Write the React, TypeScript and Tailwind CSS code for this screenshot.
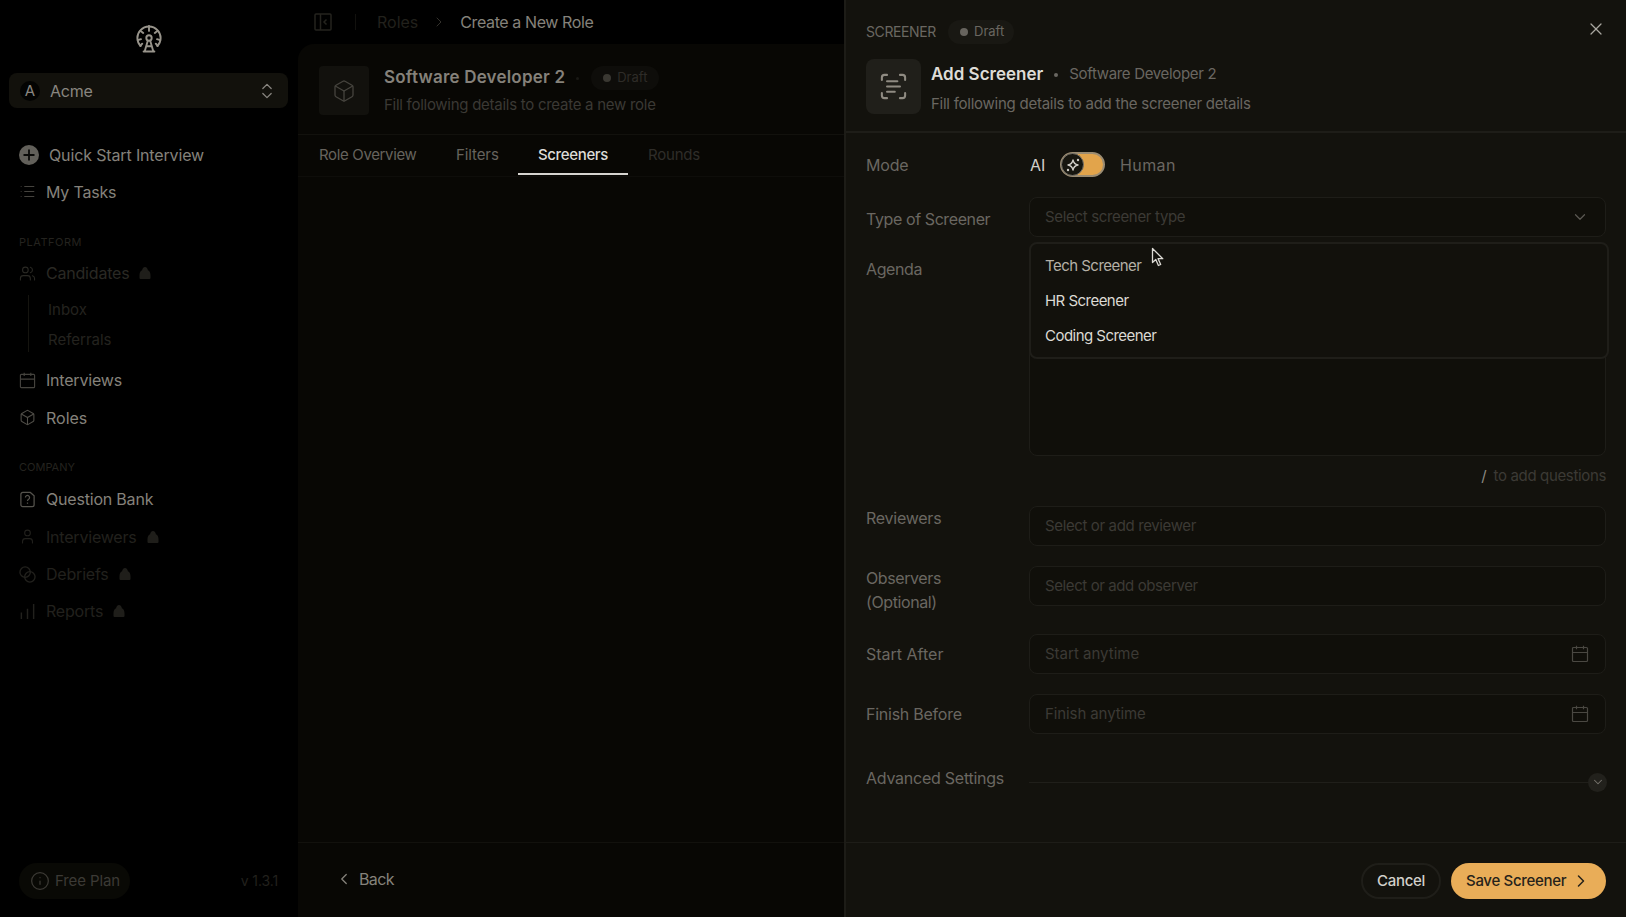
import React from 'react';
import {
  Box,
  ChevronDown,
  ChevronLeft,
  ChevronRight,
  ChevronsUpDown,
  Info,
  List,
  ScanText,
  User,
  Users,
  X,
} from 'lucide-react';

interface NavItemProps {
  icon: React.ReactNode;
  label: string;
  className?: string;
  locked?: boolean;
}

const CalendarIcon = ({ className }: { className?: string }) => (
  <svg viewBox="0 0 18 18" fill="none" stroke="currentColor" strokeWidth="1.2" className={className}>
    <rect x="1.5" y="2.5" width="15" height="14" rx="1" />
    <path d="M1.5 7.5h15M5.500 .8v3.400M12.500 .8v3.400" />
  </svg>
);

const Logo = () => (
  <svg viewBox="0 0 26 28" className="h-7 w-[26px] text-[#98948b]" fill="none" stroke="currentColor" strokeWidth="1.9" strokeLinecap="round">
    <path d="M4.600 21A11.300 11.300 0 0 1 4.600 5.200M4.600 5.200A11.300 11.300 0 0 1 21.400 5.200M21.400 5.200A11.300 11.300 0 0 1 21.400 21" />
    <path d="M13 .9v5M4.400 5.800l2.800 2.200M21.600 5.800l-2.800 2.200M1.800 15.200l3.200-1M24.200 15.200l-3.200-1M4.400 21l1.800-2.300M21.600 21l-1.800-2.300" />
    <circle cx="13" cy="13" r="2.700" />
    <path d="M11.800 15.800L8.800 26M14.200 15.800l3 10.200M7.600 26.500h10.800M11 21.200h4" />
  </svg>
);

const PanelIcon = () => (
  <svg viewBox="0 0 18 18" className="h-[18px] w-[18px] text-[#24231e]" fill="none" stroke="currentColor" strokeWidth="1.500">
    <rect x="1" y="1" width="16" height="16" rx="1" />
    <path d="M6.500 1v16M12.500 6.500L10 9l2.500 2.500" />
  </svg>
);

const SparkleIcon = () => (
  <svg viewBox="0 0 16 16" className="h-4 w-4 text-[#cfccc5]" fill="none" stroke="currentColor" strokeWidth="1.400" strokeLinejoin="round">
    <path d="M8 3c.6 3 2 4.400 5 5-3 .6-4.400 2-5 5-.6-3-2-4.400-5-5 3-.6 4.400-2 5-5Z" />
    <circle cx="13" cy="3" r="1.200" fill="currentColor" stroke="none" />
    <circle cx="3" cy="13" r="1.200" fill="currentColor" stroke="none" />
  </svg>
);

const LockBadge = () => (
  <svg viewBox="0 0 12 12" className="h-3 w-3 text-[#1f1e1a]" fill="currentColor">
    <path d="M6 0C7.6 0 8.6 1.4 8.9 3.2 10.800 4 11.500 6 11.500 8.600V11q0 1-1 1H1.500q-1 0-1-1V8.600C.5 6 1.200 4 3.100 3.200 3.400 1.400 4.400 0 6 0Z" />
  </svg>
);

const NavItem = ({ icon, label, className = 'text-[#85827b]', locked }: NavItemProps) => (
  <div className={`flex h-[37.4px] items-center pl-[19px] text-base tracking-[-0.2px] ${className}`}>
    <span className="flex w-[27px] shrink-0 items-center">{icon}</span>
    <span>{label}</span>
    {locked && <span className="ml-[10px]"><LockBadge /></span>}
  </div>
);

const Sidebar = () => (
  <aside className="flex w-[298px] shrink-0 flex-col bg-black">
    <div className="flex h-[73px] w-[297px] justify-center pt-[25px]">
      <Logo />
    </div>
    <div className="ml-[9px] flex h-[35px] w-[279px] items-center rounded-lg bg-[#12110c] pr-[11px] pl-[11px] text-[#898680]">
      <span className="flex h-5 w-5 items-center justify-center rounded-full bg-[#030302] pt-px text-[15px]">A</span>
      <span className="ml-[10px] text-base tracking-[-0.2px]">Acme</span>
      <ChevronsUpDown className="ml-auto h-5 w-5" strokeWidth={1.5} />
    </div>

    <div className="mt-[29px] flex h-[36px] items-center pl-[19px] text-base tracking-[-0.14px] text-[#85827b]">
      <svg viewBox="0 0 20 20" className="h-5 w-5">
        <circle cx="10" cy="10" r="10" fill="#62605a" />
        <path d="M10 4.500v11M4.500 10h11" stroke="#0a0a08" strokeWidth="1.800" />
      </svg>
      <span className="ml-[10px]">Quick Start Interview</span>
    </div>
    <NavItem icon={<List className="h-[17px] w-[17px] text-[#45433e]" strokeWidth={1.5} />} label="My Tasks" />

    <p className="mt-[24px] h-4 pl-[19px] text-[11px] leading-4 tracking-[0.5px] text-[#24231f]">PLATFORM</p>
    <div className="mt-[4px]">
      <NavItem icon={<Users className="h-[17px] w-[17px]" strokeWidth={1.5} />} label="Candidates" className="text-[#2a2924]" locked />
    </div>
    <div className="mt-[3px] ml-7 flex h-[57px] flex-col border-l border-[#15140f] pl-[19px] text-[15px] leading-[30px] text-[#24231f]">
      <span>Inbox</span>
      <span>Referrals</span>
    </div>
    <div className="mt-[10px]">
      <NavItem icon={<CalendarIcon className="h-[17px] w-[17px] text-[#45433e]" />} label="Interviews" />
      <NavItem icon={<Box className="h-[17px] w-[17px] text-[#504e48]" strokeWidth={1.5} />} label="Roles" className="tracking-normal text-[#85827b]" />
    </div>

    <p className="mt-[22px] h-4 pl-[19px] text-[11px] leading-4 text-[#24231f]">COMPANY</p>
    <div className="mt-[6px]">
      <NavItem
        icon={
          <svg viewBox="0 0 18 18" className="h-[17px] w-[17px] text-[#55534d]" fill="none" stroke="currentColor" strokeWidth="1.3">
            <path d="M4 1.500h8l4 3.500v9.500a2 2 0 0 1-2 2H4a2 2 0 0 1-2-2v-11a2 2 0 0 1 2-2Z" />
            <path d="M6.800 7a2.200 2.200 0 1 1 3.400 1.800c-.8.5-1.200.8-1.200 1.700M9 12.200v1.300" />
          </svg>
        }
        label="Question Bank"
      />
      <NavItem icon={<User className="h-[17px] w-[17px]" strokeWidth={1.5} />} label="Interviewers" className="text-[#22211d]" locked />
      <NavItem
        icon={
          <svg viewBox="0 0 18 18" className="h-[17px] w-[17px]" fill="none" stroke="currentColor" strokeWidth="1.400">
            <circle cx="6.500" cy="6.500" r="5.500" />
            <circle cx="11.500" cy="11.500" r="5.500" />
          </svg>
        }
        label="Debriefs"
        className="text-[#22211d]"
        locked
      />
      <NavItem
        icon={
          <svg viewBox="0 0 18 18" className="h-[17px] w-[17px]" stroke="currentColor" strokeWidth="1.500">
            <path d="M2.500 10v7M9 6v11M15.500 1v16" />
          </svg>
        }
        label="Reports"
        className="text-[#22211d]"
        locked
      />
    </div>

    <div className="mt-auto mb-[18px] flex items-center justify-between pr-[20px] pl-[19px]">
      <span className="flex h-9 w-[111px] items-center rounded-full bg-[#090905] pl-[11px] text-[15px] tracking-[-0.1px] text-[#3c3a35]">
        <Info className="mr-[5px] h-5 w-5" strokeWidth={1.5} />
        Free Plan
      </span>
      <span className="pb-px text-[14px] tracking-[-0.1px] text-[#22211d]">v 1.3.1</span>
    </div>
  </aside>
);

const RolePage = () => (
  <main className="flex w-[546px] shrink-0 flex-col bg-black">
    <div className="flex h-[43px] items-center pl-[16px] text-base">
      <PanelIcon />
      <span className="ml-[23px] h-4 w-px bg-[#12110e]" />
      <span className="ml-[21px] text-[#22211c]">Roles</span>
      <ChevronRight className="ml-[13px] h-4 w-4 text-[#33312c]" strokeWidth={1.5} />
      <span className="ml-[13px] tracking-[-0.4px] text-[#85827b]">Create a New Role</span>
    </div>
    <div className="mt-px flex grow flex-col rounded-tl-2xl bg-[#080704]">
      <div className="flex h-[91px] border-b border-[#12110d] pt-[22px] pl-[21px]">
        <div className="flex h-[49px] w-[50px] items-center justify-center rounded bg-[#12110d]">
          <Box className="h-6 w-6 text-[#46443e]" strokeWidth={1.3} />
        </div>
        <div className="ml-[15px]">
          <div className="flex h-6 items-center">
            <h1 className="text-[17px] font-semibold tracking-[0.2px] text-[#85817a]">Software Developer 2</h1>
            <span className="ml-[11px] h-[3px] w-[3px] rounded-full bg-[#1a1915]" />
            <span className="ml-[12px] flex h-6 w-[68px] items-center rounded-full bg-[#0e0d0a] pl-[12px] text-[13px] text-[#2e2c28]">
              <span className="mr-[6px] h-2 w-2 rounded-full bg-[#3a3832]" />
              Draft
            </span>
          </div>
          <p className="mt-[5px] text-[15px] leading-5 tracking-[-0.27px] text-[#3b3934]">Fill following details to create a new role</p>
        </div>
      </div>
      <nav className="flex h-[42px] border-b border-[#0e0d0a] pl-[1px] text-[15px] tracking-[-0.35px] text-[#66635d]">
        <span className="w-[137px] pt-[9px] pl-[20px]">Role Overview</span>
        <span className="w-[82px] pt-[9px] pl-[20px] tracking-[-0.1px]">Filters</span>
        <span className="h-[40px] w-[110px] border-b-2 border-[#d6d4d0] pt-[9px] text-center font-medium text-[#dedcd7]">Screeners</span>
        <span className="pt-[9px] pl-[20px] tracking-[-0.2px] text-[#2f2d29]">Rounds</span>
      </nav>
      <div className="grow" />
      <div className="flex h-[75px] items-center border-t border-[#12110d] pb-[2px] pl-[37px] text-base text-[#85827b]">
        <ChevronLeft className="h-[18px] w-[18px]" strokeWidth={1.7} />
        <span className="ml-[6px] tracking-[-0.6px]">Back</span>
      </div>
    </div>
  </main>
);

interface FieldProps {
  placeholder: string;
  icon?: React.ReactNode;
  className?: string;
}

const Field = ({ placeholder, icon, className = 'tracking-[-0.33px]' }: FieldProps) => (
  <div className={`flex h-10 w-[577px] items-center justify-between rounded-lg border border-[#1e1d18] bg-[#100f0a] pr-[16px] pl-[15px] text-[15px] text-[#3c3a35] ${className}`}>
    <span>{placeholder}</span>
    {icon}
  </div>
);

const ScreenerTypeMenu = () => (
  <div className="absolute top-[45px] left-0 z-10 flex h-[117px] w-[580px] flex-col rounded-lg border-2 border-[#1f1e19] bg-[#12110c] pt-[5px] pl-[14px] text-[15px] leading-[34.800px] tracking-[-0.53px] text-[#dcdad4]">
    <span className="text-[#b5b0a6]">Tech Screener</span>
    <span>HR Screener</span>
    <span>Coding Screener</span>
    <svg viewBox="0 0 14 20" className="absolute top-[3px] left-[120px] h-5 w-[14px]">
      <path d="M1.500 1.500v14l3.300-3 2.600 6 2.300-1-2.600-5.800h4.700z" fill="#12110c" stroke="#dcdad4" strokeWidth="1.300" strokeLinejoin="round" />
    </svg>
  </div>
);

const ScreenerDrawer = () => (
  <section className="flex w-[782px] shrink-0 flex-col border-l-2 border-[#1d1c17] bg-[#13120d] text-base text-[#6a6761]">
    <header className="h-[133px] border-b-2 border-[#1e1d18] pt-[19px] pl-[20px]">
      <div className="flex h-[25px] items-center">
        <span className="w-[82px] text-[14px] tracking-[-0.4px]">SCREENER</span>
        <span className="flex h-6 w-[66px] items-center rounded-full bg-[#191813] pl-[12px] text-[13px]">
          <span className="mr-[6px] h-2 w-2 rounded-full bg-[#67645e]" />
          Draft
        </span>
        <X className="-mt-[5px] mr-[20px] ml-auto h-5 w-5 text-[#aaa7a0]" strokeWidth={1.5} />
      </div>
      <div className="mt-[15px] flex">
        <div className="flex h-[55px] w-[55px] items-center justify-center rounded-lg bg-[#201f1a]">
          <ScanText className="h-[31px] w-[31px] text-[#8f8b82]" strokeWidth={1.6} />
        </div>
        <div className="ml-[10px] pt-[3px]">
          <div className="flex h-6 items-center pt-px">
            <h2 className="text-[17px] font-semibold text-[#dedcd7]">Add Screener</h2>
            <span className="mx-[11px] h-1 w-1 rounded-full bg-[#6a6761]" />
            <span className="text-[15px] tracking-[-0.33px]">Software Developer 2</span>
          </div>
          <p className="mt-[8px] text-[15px] leading-5 tracking-[-0.25px]">Fill following details to add the screener details</p>
        </div>
      </div>
    </header>

    <div className="flex grow flex-col pl-[20px]">
      <div className="mt-[18px] flex h-[27px] items-center">
        <span className="w-[164px] tracking-[-0.2px]">Mode</span>
        <span className="w-[30px] text-[#d2d0ca]">AI</span>
        <span className="flex h-[25px] w-[45px] items-center rounded-full border-2 border-[#9b8c72] bg-[#e2a44b]">
          <span className="-ml-px flex h-[23px] w-[23px] shrink-0 items-center justify-center rounded-full border border-[#77736a] bg-[#17160f]">
            <SparkleIcon />
          </span>
        </span>
        <span className="ml-[15px] tracking-[0.4px]">Human</span>
      </div>

      <div className="mt-[19px] flex h-[49px]">
        <span className="w-[163px] pt-[10px] tracking-[-0.4px]">Type of Screener</span>
        <div className="relative">
          <Field placeholder="Select screener type" icon={<ChevronDown className="h-[18px] w-[18px] text-[#5b5953]" strokeWidth={1.6} />} />
          <ScreenerTypeMenu />
        </div>
      </div>
      <div className="flex h-[210px]">
        <span className="w-[163px] pt-[11px] tracking-[-0.4px]">Agenda</span>
        <div className="h-[210px] w-[577px] rounded-lg border border-[#1e1d18] bg-[#100f0a]" />
      </div>
      <div className="mt-[8px] mr-[20px] flex h-6 items-center justify-end gap-[7px] text-[15px] text-[#3c3a35]">
        <span className="text-[#8d8a83]">/</span>
        <span className="tracking-[-0.35px]">to add questions</span>
      </div>

      <div className="mt-[18px] flex h-[60px]">
        <span className="w-[163px] tracking-[-0.25px]">Reviewers</span>
        <Field placeholder="Select or add reviewer" className="tracking-[-0.37px]" />
      </div>
      <div className="flex h-[68px]">
        <span className="w-[163px] leading-6 tracking-[-0.4px]">
          Observers
          <br />
          (Optional)
        </span>
        <Field placeholder="Select or add observer" className="tracking-[-0.4px]" />
      </div>
      <div className="flex h-[60px]">
        <span className="w-[163px] pt-[8px]">Start After</span>
        <Field placeholder="Start anytime" className="tracking-normal" icon={<CalendarIcon className="h-[18px] w-[18px] text-[#4a4842]" />} />
      </div>
      <div className="flex h-[60px]">
        <span className="w-[163px] pt-[8px] tracking-[-0.25px]">Finish Before</span>
        <Field placeholder="Finish anytime" className="tracking-[-0.1px]" icon={<CalendarIcon className="h-[18px] w-[18px] text-[#4a4842]" />} />
      </div>
      <div className="mt-[12px] flex h-7 items-center">
        <span className="w-[163px] pb-[4px] tracking-[-0.25px]">Advanced Settings</span>
        <span className="mt-[4px] h-px w-[559px] bg-[#201f1a]" />
        <span className="mt-[4px] flex h-[19px] w-[19px] items-center justify-center rounded-full bg-[#22211c]">
          <ChevronDown className="h-[14px] w-[14px] text-[#77746d]" strokeWidth={1.800} />
        </span>
      </div>
    </div>

    <footer className="flex h-[75px] items-center justify-end gap-[10px] border-t border-[#1e1d18] pt-[2px] pr-[20px] text-[15px] font-medium tracking-[-0.3px]">
      <button className="h-[36px] w-[80px] rounded-full border-2 border-[#1f1e19] text-[#d2d0ca]">Cancel</button>
      <button className="flex h-[36px] w-[155px] items-center rounded-full bg-[#e9ad58] pl-[15px] text-[#26221a]">
        Save Screener
        <ChevronRight className="ml-[5px] h-[20px] w-[20px]" strokeWidth={1.8} />
      </button>
    </footer>
  </section>
);

const App: React.FC = () => (
  <div className="flex h-[917px] w-[1626px] overflow-hidden bg-black font-[Inter,sans-serif] whitespace-nowrap">
    <Sidebar />
    <RolePage />
    <ScreenerDrawer />
  </div>
);

export default App;
